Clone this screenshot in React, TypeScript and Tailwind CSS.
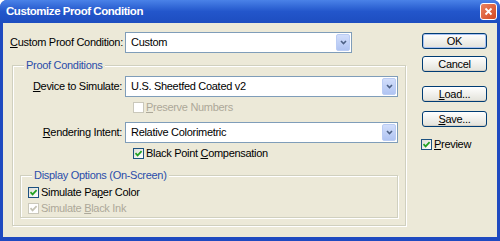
import React from "react";

function U({ children }: { children: React.ReactNode }) {
  return <span className="underline underline-offset-[1px] decoration-[1px]">{children}</span>;
}

function Select({ value, w }: { value: string; w: string }) {
  return (
    <div className={`${w} h-[21px] flex items-center bg-white border border-[#7F9DB9] pl-[5px] pr-[1px]`}>
      <span className="flex-1 text-black">{value}</span>
      <div className="w-[14px] h-[17px] rounded-[2px] bg-gradient-to-b from-[#D2DEFB] to-[#B0C4F2] border border-[#BACCF4] flex items-center justify-center">
        <svg width="7" height="5" viewBox="0 0 7 5">
          <path d="M1 1 L3.5 3.5 L6 1" stroke="#4D6185" strokeWidth="1.6" fill="none" />
        </svg>
      </div>
    </div>
  );
}

function Check({ checked, disabled }: { checked?: boolean; disabled?: boolean }) {
  return (
    <div
      className={`w-[11px] h-[11px] border flex items-center justify-center ${
        disabled ? "border-[#CAC8BB] bg-white" : "border-[#1C5180] bg-gradient-to-br from-[#DCDCD7] to-white"
      }`}
    >
      {checked && (
        <svg width="9" height="9" viewBox="0 0 9 9">
          <path
            d="M1.5 4.2 L3.6 6.4 L7.6 2.2"
            stroke={disabled ? "#C4C2B4" : "#21A121"}
            strokeWidth="1.7"
            fill="none"
          />
        </svg>
      )}
    </div>
  );
}

function Btn({ children, def }: { children: React.ReactNode; def?: boolean }) {
  return (
    <div
      className={`w-[65px] h-[16px] rounded-[3px] border border-[#003C74] bg-gradient-to-b from-white to-[#E3E2DA] flex items-center justify-center text-black ${
        def ? "shadow-[inset_0_0_0_1px_#A9C2F3]" : "shadow-[inset_0_-1px_0_#D6D0C5]"
      }`}
    >
      {children}
    </div>
  );
}

export default function App() {
  return (
    <div className="w-[500px] h-[241px] flex flex-col bg-[#1F4AC0] rounded-t-[7px] font-['Liberation_Sans',Arial,sans-serif] text-[11px] tracking-[-0.3px] leading-[13px] text-black overflow-hidden">
      <div className="h-[23px] flex items-center pl-[6px] pr-[3px] bg-gradient-to-b from-[#4A82E8] via-[#2356CB] to-[#1D4DC0]">
        <span className="flex-1 text-white font-bold text-[11.5px] tracking-[-0.45px]">Customize Proof Condition</span>
        <div className="w-[17px] h-[17px] rounded-[3px] border border-white bg-gradient-to-br from-[#E9825F] to-[#D4471E] flex items-center justify-center">
          <svg width="9" height="9" viewBox="0 0 9 9">
            <path d="M1.5 1.5 L7.5 7.5 M7.5 1.5 L1.5 7.5" stroke="white" strokeWidth="1.8" />
          </svg>
        </div>
      </div>
      <div className="flex-1 mx-[3px] mb-[4px] bg-[#ECE9D8] flex pt-[9px] pl-[7px]">
        <div className="w-[395px] flex flex-col">
          <div className="flex items-center h-[21px]">
            <div className="w-[115px]">
              <U>C</U>ustom Proof Condition:
            </div>
            <Select value="Custom" w="w-[227px]" />
          </div>
          <fieldset className="mt-[6px] ml-[2px] w-[394px] border border-[#D0D0BF] shadow-[inset_1px_1px_0_#fff,1px_1px_0_#fff] p-0 pb-[7px] m-0">
            <legend className="ml-[11px] px-[2px] text-[#2A4DAA] bg-[#ECE9D8]">Proof Conditions</legend>
            <div className="mt-[4px] flex items-center h-[21px]">
              <div className="w-[112px] text-right pr-[3px]">
                <U>D</U>evice to Simulate:
              </div>
              <Select value="U.S. Sheetfed Coated v2" w="w-[273px]" />
            </div>
            <div className="mt-[5px] ml-[120px] flex items-center gap-[2px] h-[11px] text-[#ACA899]">
              <Check disabled />
              <span>
                <U>P</U>reserve Numbers
              </span>
            </div>
            <div className="mt-[9px] flex items-center h-[21px]">
              <div className="w-[112px] text-right pr-[3px]">
                <U>R</U>endering Intent:
              </div>
              <Select value="Relative Colorimetric" w="w-[273px]" />
            </div>
            <div className="mt-[5px] ml-[120px] flex items-center gap-[2px] h-[11px]">
              <Check checked />
              <span>
                Black Point <U>C</U>ompensation
              </span>
            </div>
            <fieldset className="mt-[10px] ml-[7px] w-[378px] border border-[#D0D0BF] shadow-[inset_1px_1px_0_#fff,1px_1px_0_#fff] p-0 pb-[3px] m-0">
              <legend className="ml-[11px] px-[2px] text-[#2A4DAA] bg-[#ECE9D8]">Display Options (On-Screen)</legend>
              <div className="pt-[5px] pl-[7px] flex flex-col">
                <div className="flex items-center gap-[2px] h-[11px]">
                  <Check checked />
                  <span>
                    Simulate Pa<U>p</U>er Color
                  </span>
                </div>
                <div className="mt-[5px] flex items-center gap-[2px] h-[11px] text-[#ACA899]">
                  <Check checked disabled />
                  <span>
                    Simulate <U>B</U>lack Ink
                  </span>
                </div>
              </div>
            </fieldset>
          </fieldset>
        </div>
        <div className="ml-[16px] flex flex-col pt-[1px]">
          <div className="ml-[1px] flex flex-col">
            <Btn def>OK</Btn>
            <div className="mt-[7px]">
              <Btn>Cancel</Btn>
            </div>
            <div className="mt-[14px]">
              <Btn>
                <U>L</U>oad...
              </Btn>
            </div>
            <div className="mt-[9px]">
              <Btn>
                <U>S</U>ave...
              </Btn>
            </div>
          </div>
          <div className="mt-[12px] flex items-center gap-[2px] h-[11px]">
            <Check checked />
            <span>
              <U>P</U>review
            </span>
          </div>
        </div>
      </div>
    </div>
  );
}
